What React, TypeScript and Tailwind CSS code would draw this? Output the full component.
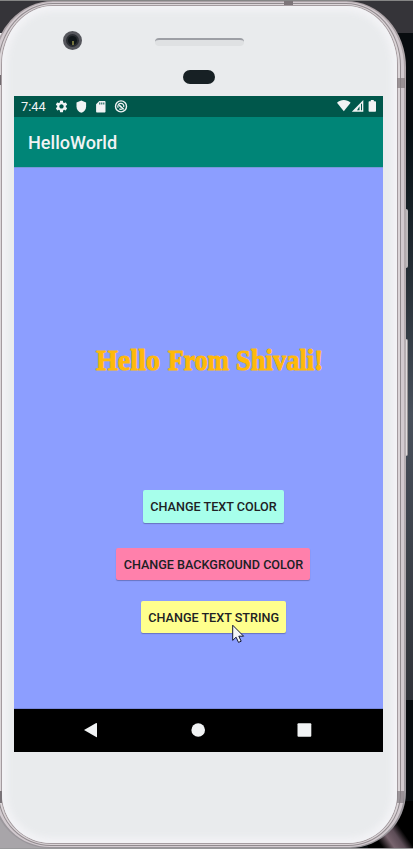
import React from "react";

function StatusIcons() {
  return (
    <svg className="ml-[9px] mt-[3px] h-[15px] w-[76px]" viewBox="0 0 76 15" fill="#f1f3f4">
      <g transform="translate(-0.7 0.2) scale(0.6)">
        <path d="M19.14 12.94c.04-.3.06-.61.06-.94 0-.32-.02-.64-.07-.94l2.03-1.58c.18-.14.23-.41.12-.61l-1.92-3.32c-.12-.22-.37-.29-.59-.22l-2.39.96c-.5-.38-1.03-.7-1.62-.94l-.36-2.54c-.04-.24-.24-.41-.48-.41h-3.84c-.24 0-.43.17-.47.41l-.36 2.54c-.59.24-1.13.57-1.62.94l-2.39-.96c-.22-.08-.47 0-.59.22L2.74 8.87c-.12.21-.08.47.12.61l2.03 1.58c-.05.3-.09.63-.09.94s.02.64.07.94l-2.03 1.58c-.18.14-.23.41-.12.61l1.92 3.32c.12.22.37.29.59.22l2.39-.96c.5.38 1.03.7 1.62.94l.36 2.54c.05.24.24.41.48.41h3.84c.24 0 .44-.17.47-.41l.36-2.54c.59-.24 1.13-.56 1.62-.94l2.39.96c.22.08.47 0 .59-.22l1.92-3.32c.12-.22.07-.47-.12-.61l-2.01-1.58zM12 15.6c-1.98 0-3.6-1.62-3.6-3.6s1.62-3.6 3.6-3.6 3.6 1.62 3.6 3.6-1.62 3.6-3.6 3.6z" />
      </g>
      <path d="M26.3 1.4 21.5 3.4v4c0 3.2 2 5.3 4.8 6.4 2.8-1.1 4.8-3.2 4.8-6.4v-4z" />
      <path fillRule="evenodd" d="M44.3 2h5.2c.6 0 1 .4 1 1v9.4c0 .6-.4 1-1 1h-7.4c-.6 0-1-.4-1-1V5.2zM44.3 3.6v2h1v-2zm2 0v2h1v-2zm2 0v2h1v-2z" />
      <g fill="none" stroke="#f1f3f4">
        <circle cx="66" cy="7.4" r="5.5" strokeWidth="1.4" />
        <path d="M63.2 8.8a3 3 0 1 1 5.5-.6M64.2 9.8a3 3 0 0 0 2.6.5" strokeWidth="1.2" />
        <path d="m64.2 6.2 4.4 4.2" strokeWidth="1.6" />
      </g>
    </svg>
  );
}

function SignalIcons() {
  return (
    <svg className="mr-[6.5px] ml-auto mt-[3px] h-[14px] w-[40px]" viewBox="0 0 40 14" fill="#f1f3f4">
      <path d="M0 3.7C3.8.1 9.8.1 13.6 3.7L6.8 12.3z" />
      <path fillRule="evenodd" d="M26.3 1v11.7H14.8zM20 11.3h2.5V7.2zm4-6.1v6.1h1V4.2z" />
      <path d="M33.8 1h3v1.2h1.4c.5 0 .8.3.8.8v9c0 .5-.3.8-.8.8h-5.8c-.5 0-.8-.3-.8-.8V3c0-.5.3-.8.8-.8h1.4z" />
    </svg>
  );
}

function ActionButton({ label, className }: { label: string; className: string }) {
  return (
    <button
      className={`block rounded-[2px] pt-[2px] text-center text-[12.62px] font-medium whitespace-nowrap text-[#202124] shadow-[0_1px_1px_rgba(50,50,100,0.4)] ${className}`}
    >
      {label}
    </button>
  );
}

function Screen() {
  return (
    <div className="flex h-[656px] w-[369px] flex-col font-['Roboto',sans-serif]">
      <div className="flex h-[21px] bg-[#00574b] text-[#f1f3f4]">
        <span className="ml-[7px] w-[25px] text-[12.8px] leading-[22px]">7:44</span>
        <StatusIcons />
        <SignalIcons />
      </div>
      <header className="flex h-[50px] items-center bg-[#008577] pt-[2px] pl-[14px]">
        <h1 className="text-[18.1px] font-medium text-[#f1f3f4]">HelloWorld</h1>
      </header>
      <main className="h-[542px] border-t border-b border-t-[#7898d8] border-b-[#7888dd] bg-[#8c9eff]">
        <div className="pt-[173px]">
          <svg
            className="block h-[42px] w-[369px] overflow-visible fill-[#ffb90a] stroke-[#ffb90a] font-['Liberation_Serif',serif] text-[29.5px] font-bold"
            viewBox="0 0 369 42"
            strokeWidth="1.1"
            strokeLinejoin="round"
          >
            <text x="82" y="28.5" textLength="64" lengthAdjust="spacingAndGlyphs">Hello</text>
            <text x="154" y="28.5" textLength="61" lengthAdjust="spacingAndGlyphs">From</text>
            <text x="222" y="28.5" textLength="87" lengthAdjust="spacingAndGlyphs">Shivali!</text>
          </svg>
        </div>
        <div className="mt-[107px] flex flex-col items-start">
          <ActionButton label="CHANGE TEXT COLOR" className="ml-[129px] h-[33px] w-[141px] bg-[#a7ffeb]" />
          <ActionButton label="CHANGE BACKGROUND COLOR" className="mt-[25px] ml-[102.4px] h-[32px] w-[194px] bg-[#ff80ab]" />
          <div className="relative mt-[21px] ml-[127.4px]">
            <ActionButton label="CHANGE TEXT STRING" className="h-[32px] w-[144.6px] bg-[#ffff8d]" />
            <svg className="absolute top-[23px] left-[91px] h-[20px] w-[14px]" viewBox="0 0 14 20">
              <path d="M.7 1.2v15.2l3.4-3.2 2.4 5.2 2.7-1.2-2.4-5h4.8z" fill="#f4f5f8" stroke="#111630" strokeWidth="1" />
            </svg>
          </div>
        </div>
      </main>
      <nav className="h-[43px] bg-black">
        <svg className="h-[43px] w-[369px]" viewBox="0 0 369 43" fill="#f1f3f4">
          <path d="M70 21 82.2 14q.8-.3.8.5v13.2q0 .8-.8.4z" />
          <circle cx="184.2" cy="21" r="6.8" />
          <rect x="283.5" y="14.2" width="13.8" height="13.6" rx="1" />
        </svg>
      </nav>
    </div>
  );
}

export default function App() {
  return (
    <div className="relative flex h-[849px] w-[413px] overflow-hidden bg-[#080c0f]">
      <div className="absolute inset-x-0 top-0 h-[33px] border-t border-[#858585] bg-[#353439]" />
      <div className="absolute top-[33px] left-0 h-[60px] w-[8px] bg-[#f0f0f3]" />
      <div className="absolute bottom-0 left-0 h-[100px] w-[90px] bg-[#a8a5a9]" />
      <div className="absolute top-[130px] right-0 h-[570px] w-[10px] bg-linear-to-b from-[#071014] via-[#48505b] via-50% to-[#303238]" />
      <div className="absolute right-0 bottom-0 h-[48px] w-[45px] bg-[linear-gradient(55deg,#000_20%,#77636d_35%,#5c4c56_48%,#000_60%)]" />
      <div className="absolute inset-x-0 bottom-0 h-px bg-[#99999b]" />
      <div className="absolute top-[209px] left-[404px] h-[59px] w-[4px] rounded-[2px] bg-[#bcb8ba]" />
      <div className="absolute top-[339px] left-[404px] h-[117px] w-[4px] rounded-[2px] border-r border-[#9b9698] bg-[#dedbdc]" />

      <div className="relative mt-px -ml-[7px] h-[847px] w-[413px] shrink-0 rounded-[60px/66px] rounded-b-[56px] bg-linear-to-b from-[#aba2a6] via-[#b8b0b4] to-[#99959a] px-[2px] py-px">
        <div className="h-full rounded-[58px/65px] rounded-b-[55px] bg-[#d2cacf] px-[3px] py-px">
          <div className="h-full rounded-[55px/63px] rounded-b-[53px] bg-[#918a8e] px-px pt-px pb-px">
            <div className="h-full rounded-[54px/62px] rounded-b-[52px] bg-[#dbd5d8] px-[2px] py-px">
              <div className="h-full rounded-[52px/60px] rounded-b-[50px] bg-[#a49b9f] p-px">
                <div className="flex h-full flex-col rounded-[51px/59px] rounded-b-[49px] bg-[#e9ebed] pl-[12px] shadow-[inset_0_0_7px_5px_#f3f3f6]">
                  <div className="flex h-[90px] flex-col">
                    <div className="mt-[25px] flex h-[19px] items-start">
                      <div className="ml-[49px] flex size-[19px] items-center justify-center rounded-full border-[3px] border-[#55565c] bg-[#292c31]">
                        <div className="flex size-[9px] items-center justify-center rounded-full bg-[#101619]">
                          <div className="mt-[4px] ml-px h-[4px] w-[2px] bg-[#74733e]" />
                        </div>
                      </div>
                      <div className="mt-[7px] ml-[73px] h-[8px] w-[89px] rounded-[4px] border-t-2 border-[#9d9fa5] bg-[#dfe1e3]" />
                    </div>
                    <div className="mt-[20px] ml-[169px] h-[14px] w-[32px] rounded-full bg-[#172024]" />
                  </div>
                  <Screen />
                </div>
              </div>
            </div>
          </div>
        </div>
      </div>
      <div className="absolute top-[1px] left-[284px] h-[4px] w-[9px] bg-[#7d7579]" />
      <div className="absolute top-[78px] left-[397px] h-[10px] w-[8px] bg-[#877d81]/75" />
      <div className="absolute top-[791px] left-[397px] h-[12px] w-[7px] bg-[#817b80]/70" />
      <div className="absolute top-[75px] left-0 h-[10px] w-px bg-[#70696e]" />
      <div className="absolute top-[791px] left-0 h-[12px] w-[2px] bg-[#797378]" />
    </div>
  );
}
